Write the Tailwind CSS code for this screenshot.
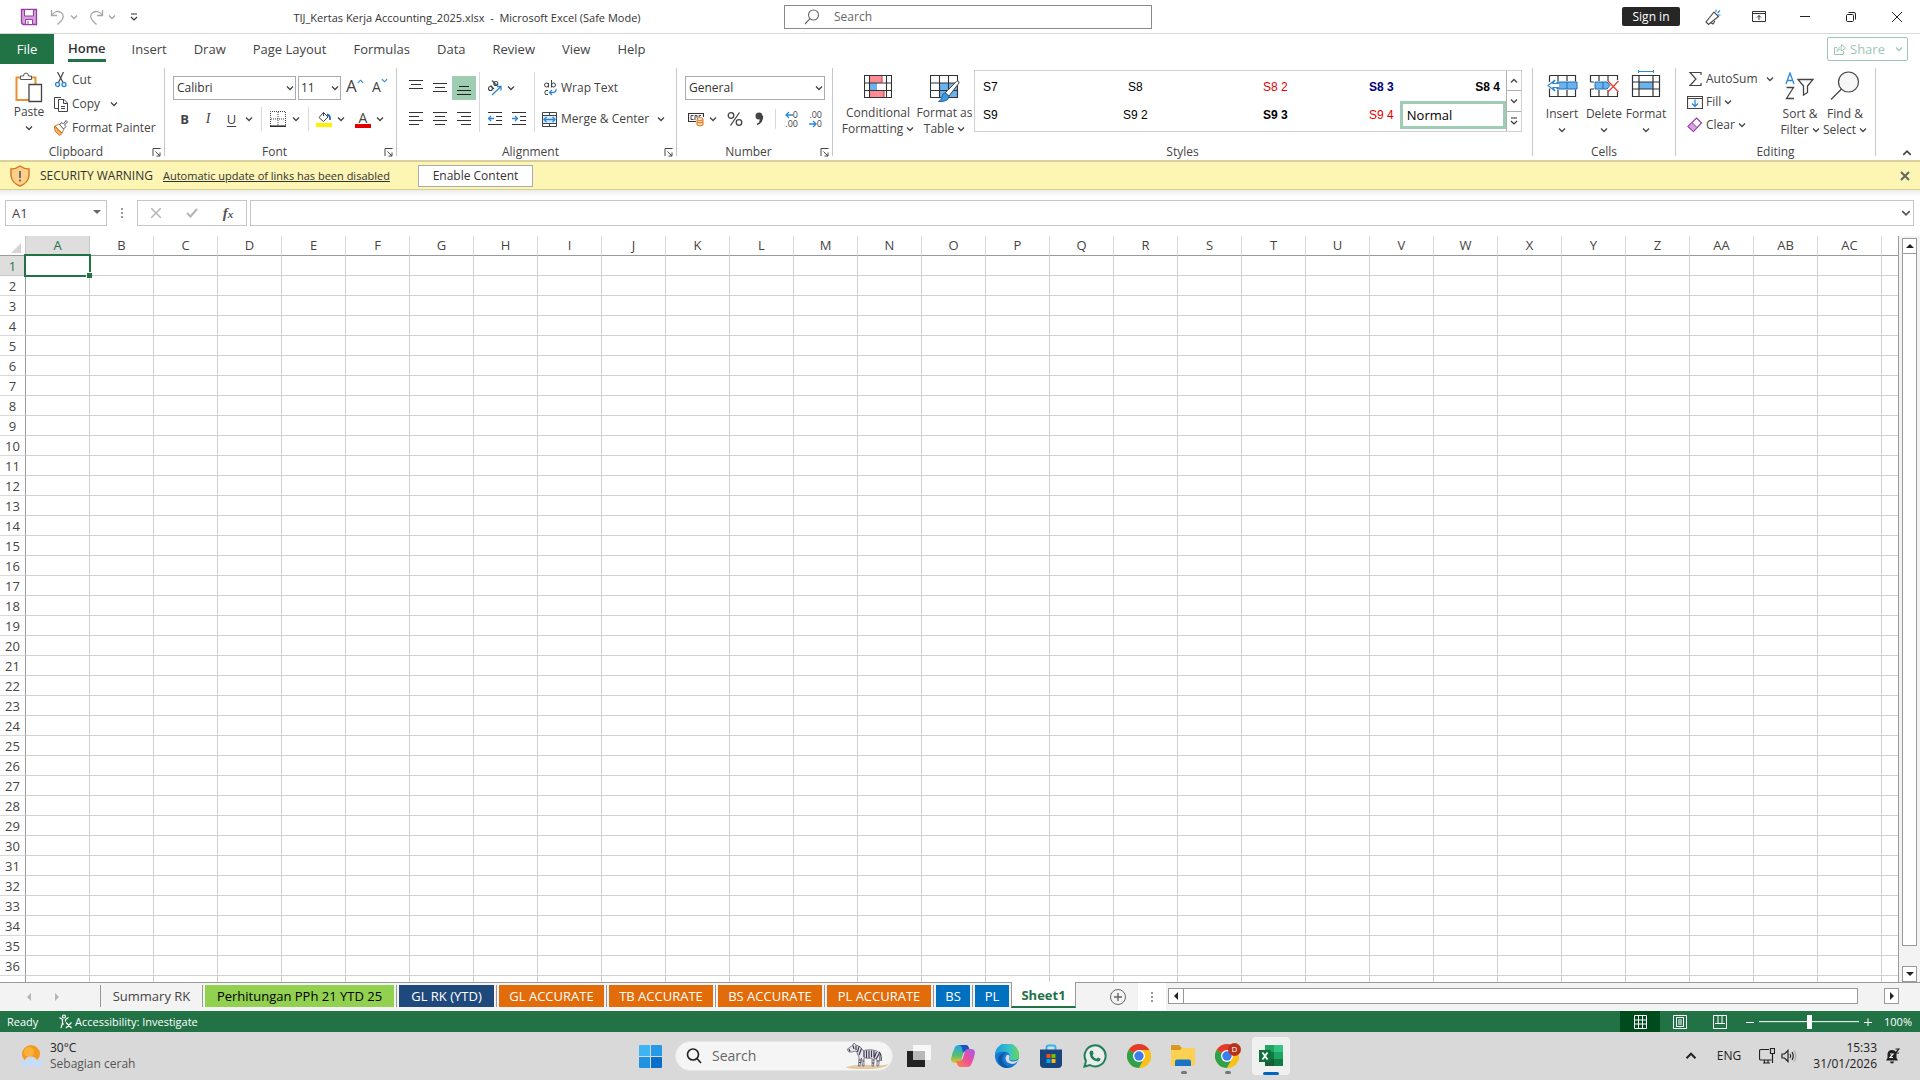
<!DOCTYPE html>
<html lang="en">
<head>
    <meta charset="UTF-8">
    <meta name="viewport" content="width=device-width, initial-scale=1.0">
    <title>TIJ_Kertas Kerja Accounting_2025.xlsx - Microsoft Excel</title>
    <script src="https://cdn.jsdelivr.net/npm/@tailwindcss/browser@4"></script>
</head>
<body class="h-screen flex flex-col overflow-hidden bg-white text-[#333] text-[12px] leading-4 font-['Open_Sans',sans-serif] whitespace-nowrap">

    <!-- Shared icons -->
    <svg class="hidden">
        <symbol id="chev" viewBox="0 0 8 8"><path d="M1 2.5 4 5.5 7 2.5" fill="none" stroke="currentColor" stroke-width="1.3"/></symbol>
        <symbol id="launcher" viewBox="0 0 9 9"><path d="M1 8V.5H8.5M3.500 3.500 8 8M8 4.500V8H4.500" fill="none" stroke="currentColor"/></symbol>
        <symbol id="chrome" viewBox="0 0 24 24">
            <circle cx="12" cy="12" r="12" fill="#fbc116"/>
            <path d="M12 12 1.600 6A12 12 0 0 1 22.400 6Z" fill="#e33b2e"/>
            <path d="M12 12 1.600 6A12 12 0 0 0 12 24L17 15Z" fill="#2da14c"/>
            <path d="M12 6H22.400A12 12 0 0 1 12 24L17.200 15Z" fill="#fbc116"/>
            <circle cx="12" cy="12" r="6" fill="#fff"/><circle cx="12" cy="12" r="4.700" fill="#3b7ded"/>
        </symbol>
    </svg>

    <!-- Title bar -->
    <header class="flex h-[34px] shrink-0 items-center border-b border-[#d8d8d8]">
        <div class="flex w-[784px] items-center">
            <button class="ml-5 w-[18px]" aria-label="Save"><svg class="size-[18px]" viewBox="0 0 18 18"><path d="M1.500 1.500H16.500V16.500H3L1.500 15Z" fill="#d6a2dc" stroke="#973aa5" stroke-width="1.300"/><path d="M4.500 1.500H13.500V8H4.500Z" fill="#fff" stroke="#973aa5"/><path d="M5.500 16.500V11.500H12.500V16.500Z" fill="#fff" stroke="#973aa5"/><path d="M8 13V16" stroke="#973aa5"/></svg></button>
            <button class="ml-3 w-4" aria-label="Undo"><svg class="size-4" viewBox="0 0 16 16" fill="none" stroke="#a6a6a6" stroke-width="1.300"><path d="M1.500 1V6.500H7"/><path d="M1.500 6.500C4 2.500 8 1.500 11 3.500C14 5.500 14 9 11 12L7.500 15.500"/></svg></button>
            <svg class="ml-1 size-2 text-[#a6a6a6]"><use href="#chev"/></svg>
            <button class="ml-2.5 w-4" aria-label="Redo"><svg class="size-4" viewBox="0 0 16 16" fill="none" stroke="#a6a6a6" stroke-width="1.300"><path d="M14.500 1V6.500H9"/><path d="M14.500 6.500C12 2.500 8 1.500 5 3.500C2 5.500 2 9 5 12L8.500 15.500"/></svg></button>
            <svg class="ml-1 size-2 text-[#a6a6a6]"><use href="#chev"/></svg>
            <button class="ml-3.5 w-2" aria-label="Customize toolbar"><svg class="size-2" viewBox="0 0 8 8" fill="none" stroke="#333" stroke-width="1.200"><path d="M1 1H7M1 4 4 7 7 4"/></svg></button>
            <h1 class="flex-1 pt-0.5 pl-3 text-center text-[11px] whitespace-pre">TIJ_Kertas Kerja Accounting_2025.xlsx  -  Microsoft Excel (Safe Mode)</h1>
        </div>
        <label class="flex h-6 w-[368px] items-center border border-[#8a8a8a] pl-[19px]">
            <svg class="size-4" viewBox="0 0 16 16" fill="none" stroke="#666" stroke-width="1.100"><circle cx="9.500" cy="6" r="5"/><path d="M6 9.700 1 15"/></svg>
            <input type="text" placeholder="Search" class="ml-3.5 w-40 outline-none placeholder:text-[#666]">
        </label>
        <div class="flex flex-1 items-center justify-end">
            <button class="mr-2.5 h-[19px] w-[58px] rounded-xs bg-[#262626] text-white">Sign in</button>
            <button class="flex w-[46px] justify-center" aria-label="Coming soon"><svg class="size-4" viewBox="0 0 16 16" fill="none" stroke="#444" stroke-width="1.100"><path d="M9 3 1 13 3.500 15.500 13.500 7.500ZM5.500 13.500 8 15 10 12"/><path d="M11 3V.5M12.500 4 15 1.500M13 6H15.500" stroke="#2b88d8"/></svg></button>
            <button class="flex w-[46px] justify-center" aria-label="Ribbon display options"><svg class="h-3 w-3.5" viewBox="0 0 14 12" fill="none" stroke="#333"><path d="M.5.5H13.500V10.500H.5ZM.5 2.500H13.500M7 9V4.500M5 6.500 7 4.500 9 6.500"/></svg></button>
            <button class="flex w-[46px] justify-center" aria-label="Minimize"><svg class="size-2.5" viewBox="0 0 10 10" stroke="#222"><path d="M0 4.500H10"/></svg></button>
            <button class="flex w-[46px] justify-center" aria-label="Restore"><svg class="size-2.5" viewBox="0 0 10 10" fill="none" stroke="#222"><rect x=".5" y="2.500" width="7" height="7" rx="1"/><path d="M2.500.5H8Q9.500.5 9.500 2V7.500"/></svg></button>
            <button class="flex w-[46px] justify-center" aria-label="Close"><svg class="size-2.5" viewBox="0 0 10 10" stroke="#222"><path d="M0 0 10 10M10 0 0 10"/></svg></button>
        </div>
    </header>

    <!-- Ribbon tabs -->
    <nav class="flex h-[30px] shrink-0 items-stretch text-[13px] text-[#444]">
        <button class="w-[54px] bg-[#217346] text-white">File</button>
        <button class="ml-3.5 mr-3 flex flex-col items-stretch pt-1.5 font-semibold text-[#333]">Home<span class="mt-[3px] h-[3px] bg-[#217346]"></span></button>
        <button class="pl-3.5 pr-[13px]">Insert</button>
        <button class="pl-3.5 pr-[13px]">Draw</button>
        <button class="pl-3.5 pr-[13px]">Page Layout</button>
        <button class="pl-3.5 pr-[13px]">Formulas</button>
        <button class="pl-3.5 pr-[13px]">Data</button>
        <button class="pl-3.5 pr-[13px]">Review</button>
        <button class="pl-3.5 pr-[13px]">View</button>
        <button class="pl-3.5 pr-[13px]">Help</button>
        <button class="mr-3 ml-auto mt-[3px] flex h-6 w-[81px] items-center rounded-xs border border-[#9cc7b5] pl-1.5 text-[#9cc7b5]">
            <svg class="mr-1 size-3" viewBox="0 0 12 12" fill="none" stroke="currentColor"><path d="M3 4.500H.5V11.500H9.500V8M3 8.500C3.500 5 5 4 7.500 4V1.500L11.500 5 7.500 8V6C5.500 6 4 6.500 3 8.500Z"/></svg>
            Share
            <svg class="ml-auto mr-1 size-2"><use href="#chev"/></svg>
        </button>
    </nav>

    <!-- Ribbon -->
    <div class="flex h-24 shrink-0 text-[#444]">
        <!-- Clipboard -->
        <section class="flex w-[164px] flex-col">
            <div class="flex flex-1">
                <button class="ml-2 flex w-[42px] flex-col items-center pt-2">
                    <svg class="h-8 w-7" viewBox="0 0 28 32" fill="none"><path d="M6 5.500H1.500V28H14" stroke="#e8912d" stroke-width="2"/><path d="M15 5.500H20.500V12" stroke="#e8912d" stroke-width="2"/><path d="M5.500 7.500V4H8.500Q8.500 1 11 1T13.500 4H16.500V7.500Z" fill="#fff" stroke="#555"/><path d="M14 12.500H26.500V29.500H14Z" fill="#fff" stroke="#444" stroke-width="1.300"/></svg>
                    <span>Paste</span>
                    <svg class="mt-1 size-2"><use href="#chev"/></svg>
                </button>
                <div class="flex flex-col pl-1 pt-1">
                    <button class="flex h-6 items-center gap-1"><svg class="h-4 w-3.5" viewBox="0 0 14 16" fill="none"><path d="M3.500 0 9 10.500M9.500 0 4.500 10.500" stroke="#444" stroke-width="1.200"/><circle cx="3.500" cy="12.500" r="2" stroke="#2b88d8" stroke-width="1.300"/><circle cx="10" cy="12.500" r="2" stroke="#2b88d8" stroke-width="1.300"/></svg>Cut</button>
                    <button class="flex h-6 items-center gap-1"><svg class="h-4 w-3.5" viewBox="0 0 14 16" fill="none" stroke="#444"><path d="M4 12.500H.5V1.500H7"/><path d="M4.500 3.500H10L13.500 7V15.500H4.500ZM9.500 3.500V7.500H13.500M7 10.500H11M7 12.500H11"/></svg>Copy<svg class="ml-1.5 size-2"><use href="#chev"/></svg></button>
                    <button class="flex h-6 items-center gap-1"><svg class="h-4 w-3.5" viewBox="0 0 14 16"><path d="M.5 6 8 13.500 5.500 15.500 1 11Z" fill="#f6b26b" stroke="#d9731a"/><path d="M1 6 5 4 10 9 8 13Z" fill="#fff" stroke="#d9731a"/><path d="M5.500 4.500 8 2.500 9.500 4 12 .5 13.500 2 10.500 5 12 6.500 9.500 9Z" fill="#fff" stroke="#555"/></svg>Format Painter</button>
                </div>
            </div>
            <div class="grid h-4 grid-cols-[1fr_9px] items-center pr-[3px] text-center">Clipboard<svg class="size-[9px]"><use href="#launcher"/></svg></div>
        </section>
        <div class="my-1 w-px bg-[#c8c8c8]"></div>

        <!-- Font -->
        <section class="flex w-[231px] flex-col">
            <div class="flex-1 pl-2 pt-3">
                <div class="flex h-6 items-center">
                    <div class="relative"><select aria-label="Font" class="h-6 w-[123px] appearance-none border border-[#ababab] pl-[3px] text-[#333]"><option>Calibri</option></select><svg class="absolute right-0.5 top-2 size-2"><use href="#chev"/></svg></div>
                    <div class="relative ml-0.5"><select aria-label="Font size" class="h-6 w-[43px] appearance-none border border-[#ababab] pl-0.5 text-[#333]"><option>11</option></select><svg class="absolute right-0.5 top-2 size-2"><use href="#chev"/></svg></div>
                    <button class="relative ml-[5px] w-4 pb-1 text-left text-[17px]">A<svg class="absolute -right-0.5 top-0 size-[7px] rotate-180 text-[#2b88d8]"><use href="#chev"/></svg></button>
                    <button class="relative ml-2.5 w-3.5 pb-0.5 text-left text-[14px]">A<svg class="absolute -right-0.5 -top-0.5 size-[7px] text-[#2b88d8]"><use href="#chev"/></svg></button>
                </div>
                <div class="mt-[7px] flex h-6 items-center">
                    <button class="w-[23px] text-[13px] font-bold">B</button>
                    <button class="w-6 text-[14px] italic font-['Liberation_Serif',serif]">I</button>
                    <button class="w-[23px] text-[13px] underline underline-offset-2">U</button>
                    <svg class="ml-0.5 size-2"><use href="#chev"/></svg>
                    <div class="ml-2 h-6 w-px bg-[#d8d8d8]"></div>
                    <button class="ml-2 w-4" aria-label="Borders"><svg class="size-4" viewBox="0 0 16 16" fill="none" stroke="#444"><path d="M.5 15V.5H15.500V15M8 1V15M1 8H15" stroke-dasharray="1 1"/><path d="M0 15.200H16" stroke="#222" stroke-width="1.500"/></svg></button>
                    <svg class="ml-1.5 size-2"><use href="#chev"/></svg>
                    <div class="ml-2 h-6 w-px bg-[#d8d8d8]"></div>
                    <button class="ml-[7px] w-4" aria-label="Fill color"><svg class="size-4" viewBox="0 0 16 16" fill="none"><path d="M7.500 1.500 12 6 7.500 10.500 3 6.500ZM7.500 1.500V5" stroke="#444"/><path d="M11 3.500Q14.500 4 14 9" stroke="#1f6fb8" stroke-width="1.800"/><path d="M0 12H16V16H0Z" fill="#fff200"/></svg></button>
                    <svg class="ml-[5px] size-2"><use href="#chev"/></svg>
                    <button class="ml-2.5 w-4 border-b-4 border-[#e00000] text-[14px] leading-[13px]">A</button>
                    <svg class="ml-[5px] size-2"><use href="#chev"/></svg>
                </div>
            </div>
            <div class="grid h-4 grid-cols-[1fr_9px] items-center pr-[3px] text-center">Font<svg class="size-[9px]"><use href="#launcher"/></svg></div>
        </section>
        <div class="my-1 w-px bg-[#c8c8c8]"></div>

        <!-- Alignment -->
        <section class="flex w-[279px] flex-col">
            <div class="flex flex-1 pl-[7px]">
                <div class="grid grid-cols-[24px_24px_24px] content-start gap-y-[7px] pt-3">
                    <button class="grid h-6 place-items-center" aria-label="Top align"><svg class="h-4 w-3.5" viewBox="0 0 14 16" stroke="#333"><path d="M0 .5H14M2 4.500H12M0 8.500H14"/></svg></button>
                    <button class="grid h-6 place-items-center" aria-label="Middle align"><svg class="h-4 w-3.5" viewBox="0 0 14 16" stroke="#333"><path d="M0 3.500H14M2 7.500H12M0 11.500H14"/></svg></button>
                    <button class="grid h-6 place-items-center bg-[#9fcdb3]" aria-label="Bottom align"><svg class="h-4 w-3.5" viewBox="0 0 14 16" stroke="#222"><path d="M2 6.500H12M0 10.500H14M0 14.500H14"/></svg></button>
                    <button class="grid h-6 place-items-center" aria-label="Align left"><svg class="h-4 w-3.5" viewBox="0 0 14 16" stroke="#333"><path d="M0 1.500H14M0 5.500H10M0 9.500H14M0 13.500H10"/></svg></button>
                    <button class="grid h-6 place-items-center" aria-label="Center"><svg class="h-4 w-3.5" viewBox="0 0 14 16" stroke="#333"><path d="M0 1.500H14M2 5.500H12M0 9.500H14M2 13.500H12"/></svg></button>
                    <button class="grid h-6 place-items-center" aria-label="Align right"><svg class="h-4 w-3.5" viewBox="0 0 14 16" stroke="#333"><path d="M0 1.500H14M4 5.500H14M0 9.500H14M4 13.500H14"/></svg></button>
                </div>
                <div class="ml-[3px] mt-2 h-[60px] w-px bg-[#d8d8d8]"></div>
                <div class="w-[54px] pl-[3px] pt-3">
                    <button class="ml-1 flex h-6 items-center gap-1" aria-label="Orientation"><svg class="size-4" viewBox="0 0 16 16" fill="none"><g stroke="#444" stroke-width="1.100"><circle cx="3.500" cy="8.500" r="2"/><path d="M3.500 5.500 7 9"/><path d="M5 .5 10 5.500"/><circle cx="8.800" cy="3.500" r="2"/></g><path d="M5 15 14 6.500M10 6.500H14V10.500" stroke="#2b88d8" stroke-width="1.300"/></svg><svg class="size-2"><use href="#chev"/></svg></button>
                    <div class="mt-[7px] flex">
                        <button class="grid h-6 w-6 place-items-center" aria-label="Decrease indent"><svg class="h-4 w-3.5" viewBox="0 0 14 16" fill="none" stroke="#333"><path d="M0 1.500H14M8 5.500H14M8 9.500H14M0 13.500H14"/><path d="M6 7.500H.5M3 5 .5 7.500 3 10" stroke="#2b88d8" stroke-width="1.300"/></svg></button>
                        <button class="grid h-6 w-6 place-items-center" aria-label="Increase indent"><svg class="h-4 w-3.5" viewBox="0 0 14 16" fill="none" stroke="#333"><path d="M0 1.500H14M8 5.500H14M8 9.500H14M0 13.500H14"/><path d="M0 7.500H5.500M3 5 5.500 7.500 3 10" stroke="#2b88d8" stroke-width="1.300"/></svg></button>
                    </div>
                </div>
                <div class="mt-2 h-[60px] w-px bg-[#d8d8d8]"></div>
                <div class="pl-[7px] pt-3">
                    <button class="flex h-6 items-center gap-[3px]"><svg class="size-4" viewBox="0 0 16 16" fill="none"><g stroke="#444"><circle cx="4.500" cy="5" r="2"/><path d="M6.500 3V7.500"/><path d="M9.500 0V7.500"/><circle cx="11.500" cy="5" r="2"/><path d="M6 10.500Q3 9.500 2.800 12.500T6 14.500"/></g><path d="M14 9Q15 13 8 12.500M10 10 7.500 12.500 10 15" stroke="#2b88d8" stroke-width="1.300"/></svg>Wrap Text</button>
                    <button class="mt-[7px] flex h-6 items-center gap-1"><svg class="size-[15px]" viewBox="0 0 15 15" fill="none"><path d="M.5 3.500H14.500V11.500H.5Z" fill="#d7eaf9"/><path d="M.5.5H14.500V14.500H.5ZM.5 3.500H14.500M.5 11.500H14.500M7.500.5V3.500M7.500 11.500V14.500" stroke="#444"/><path d="M2 7.500H13M4.500 5 2 7.500 4.500 10M10.500 5 13 7.500 10.500 10" stroke="#2b88d8" stroke-width="1.300"/></svg>Merge &amp; Center<svg class="ml-1 size-2"><use href="#chev"/></svg></button>
                </div>
            </div>
            <div class="grid h-4 grid-cols-[1fr_9px] items-center pr-[3px] text-center">Alignment<svg class="size-[9px]"><use href="#launcher"/></svg></div>
        </section>
        <div class="my-1 w-px bg-[#c8c8c8]"></div>

        <!-- Number -->
        <section class="flex w-[155px] flex-col">
            <div class="flex-1 pl-2 pt-3">
                <div class="relative w-[140px]"><select aria-label="Number format" class="h-6 w-full appearance-none border border-[#ababab] pl-[3px] text-[#333]"><option>General</option></select><svg class="absolute right-0.5 top-2 size-2"><use href="#chev"/></svg></div>
                <div class="mt-[7px] flex h-6 items-center">
                    <button class="ml-[3px] w-4" aria-label="Accounting format"><svg class="size-4" viewBox="0 0 16 16" fill="none"><path d="M8 10.500H.5V2.500H15.500V6" stroke="#333" stroke-width="1.200"/><path d="M5.500 4.500H3V8.500H5.500M7 9V4.500H9V7M11 6V4.500H13" stroke="#444"/><path d="M9 8.500V14Q12 16 15 14V8.500" fill="#fbd9b5" stroke="#d9731a"/><ellipse cx="12" cy="8" rx="3" ry="1.400" fill="#fff" stroke="#d9731a"/><path d="M9 11Q12 13 15 11" stroke="#d9731a"/></svg></button>
                    <svg class="ml-[5px] size-2"><use href="#chev"/></svg>
                    <button class="ml-1.5 w-6" aria-label="Percent"><svg class="m-auto size-4" viewBox="0 0 16 16" fill="none" stroke="#444" stroke-width="1.300"><circle cx="4" cy="4.500" r="2.800"/><circle cx="12" cy="11.500" r="2.800"/><path d="M12.500 1.500 3.500 14.500"/></svg></button>
                    <button class="w-6" aria-label="Comma style"><svg class="m-auto size-4" viewBox="0 0 16 16"><circle cx="8" cy="5" r="3.500" fill="#444"/><path d="M11.500 5Q11.500 11.500 6 13.500" fill="none" stroke="#444" stroke-width="1.500"/><path d="M11.500 5Q11.500 10 8 12L9 7Z" fill="#444"/></svg></button>
                    <div class="ml-1 h-5 w-px bg-[#d8d8d8]"></div>
                    <button class="ml-1.5 flex w-4 flex-col items-end text-[9px] leading-[9px]" aria-label="Increase decimal"><span class="flex items-center"><svg class="size-2" viewBox="0 0 8 8" fill="none" stroke="#2b88d8" stroke-width="1.300"><path d="M8 4H1M4 1 1 4 4 7"/></svg>0</span><span>.00</span></button>
                    <button class="ml-2 flex w-4 flex-col items-end text-[9px] leading-[9px]" aria-label="Decrease decimal"><span>.00</span><span class="flex items-center"><svg class="size-2" viewBox="0 0 8 8" fill="none" stroke="#2b88d8" stroke-width="1.300"><path d="M0 4H7M4 1 7 4 4 7"/></svg>0</span></button>
                </div>
            </div>
            <div class="grid h-4 grid-cols-[1fr_9px] items-center pr-[3px] text-center">Number<svg class="size-[9px]"><use href="#launcher"/></svg></div>
        </section>
        <div class="my-1 w-px bg-[#c8c8c8]"></div>

        <!-- Styles -->
        <section class="flex min-w-0 flex-1 flex-col">
            <div class="flex flex-1">
                <button class="ml-2 flex w-[74px] flex-col items-center pt-[11px]">
                    <svg class="mb-1.5 h-6 w-7" viewBox="0 0 28 24" fill="none"><path d="M5.500 1H18V8H5.500ZM5.500 16H20V22.500H5.500Z" fill="#ff8c94"/><path d="M5.500 8H13V16H5.500Z" fill="#6cb2ee"/><path d="M.5.500H27.500V22.500H.5ZM.5 8H27.500M.5 15.500H27.500M5.500.5V22.500M22.500.5V22.500" stroke="#333" stroke-width="1.100"/><path d="M18 1V8M20 16V22" stroke="#c33"/></svg>
                    <span>Conditional</span>
                    <span class="flex items-center gap-[3px]">Formatting<svg class="size-2"><use href="#chev"/></svg></span>
                </button>
                <button class="flex w-[59px] flex-col items-center pt-[11px]">
                    <svg class="mb-0.5 h-7 w-[30px]" viewBox="0 0 30 28" fill="none"><path d="M9.500 8H27.500V22.500H9.500Z" fill="#6cb2ee"/><path d="M.5.500H27.500V22.500H.5ZM.5 8H27.500M.5 15.500H27.500M9.500.5V22.500M18.500.5V22.500" stroke="#333" stroke-width="1.100"/><path d="M15 18 26.500 6.500Q29 5 29 8L19 21Z" fill="#fff" stroke="#444"/><path d="M15 18 19 21Q19 27 8.500 26.500Q11.500 25 12 21.500T15 18Z" fill="#3f97e0" stroke="#2468a8"/></svg>
                    <span>Format as</span>
                    <span class="flex items-center gap-[3px]">Table<svg class="size-2"><use href="#chev"/></svg></span>
                </button>
                <div class="mt-1.5 mr-2.5 flex h-[62px] flex-1 border border-[#d0d0d0] text-black font-['Liberation_Sans',sans-serif]">
                    <div class="grid flex-1 grid-cols-5 grid-rows-[28px_28px] content-start pt-0.5 [&>button]:h-7 [&>button]:pr-1.5 [&>button]:pl-2">
                        <button class="text-left">S7</button>
                        <button>S8</button>
                        <button class="text-right text-[#e00000]">S8 2</button>
                        <button class="text-right font-bold text-[#000080]">S8 3</button>
                        <button class="text-right font-bold">S8 4</button>
                        <button class="text-left">S9</button>
                        <button>S9 2</button>
                        <button class="text-right font-bold">S9 3</button>
                        <button class="text-right text-[#e00000]">S9 4</button>
                        <button class="border-3 border-[#9fcdb3] text-left text-[13px] font-['Open_Sans',sans-serif]"><span class="-ml-1">Normal</span></button>
                    </div>
                    <div class="flex w-[15px] flex-col divide-y divide-[#b0b0b0] border-l border-[#b0b0b0] text-[#444]">
                        <button class="grid flex-1 place-items-center" aria-label="Scroll up"><svg class="size-2 rotate-180"><use href="#chev"/></svg></button>
                        <button class="grid flex-1 place-items-center" aria-label="Scroll down"><svg class="size-2"><use href="#chev"/></svg></button>
                        <button class="grid flex-1 place-items-center" aria-label="More styles"><svg class="size-2" viewBox="0 0 8 8" fill="none" stroke="#333" stroke-width="1.200"><path d="M1 1H7M1 4 4 7 7 4"/></svg></button>
                    </div>
                </div>
            </div>
            <div class="h-4 text-center">Styles</div>
        </section>
        <div class="my-1 w-px bg-[#c8c8c8]"></div>

        <!-- Cells -->
        <section class="flex w-[142px] flex-col">
            <div class="flex flex-1 pl-2">
                <button class="flex w-[42px] flex-col items-center pt-1.5">
                    <svg class="mb-1.5 h-[30px] w-8" viewBox="0 0 32 30" fill="none"><path d="M3.500 5.500H29.500V11.500M3.500 5.500V12M12 5.500V11M21 5.500V11M3.500 18.500V26.500H29.500V19.500M12 20V26M21 20V26" stroke="#333" stroke-width="1.200"/><path d="M11 12H31V19H11Z" fill="#6cb2ee" stroke="#1f6fb8"/><path d="M21 12V19" stroke="#1f6fb8"/><path d="M13 13.500H7L9 10 2 15.500 9 21 7 17.500H13" fill="#fff" stroke="#2b88d8" stroke-width="1.200"/></svg>
                    <span>Insert</span><svg class="mt-1 size-2"><use href="#chev"/></svg>
                </button>
                <button class="flex w-[42px] flex-col items-center pt-1.5">
                    <svg class="mb-1.5 h-[30px] w-8" viewBox="0 0 32 30" fill="none"><path d="M2.500 12V5.500H29.500V10M11 5.500V11M20 5.500V11M2.500 19V26.500H29.500V22M11 20V26M20 20V26M2.500 12H6M2.500 19H6" stroke="#333" stroke-width="1.200"/><path d="M7 12H19L22 15.500 19 19H7Z" fill="#6cb2ee" stroke="#1f6fb8"/><path d="M15 12V19" stroke="#1f6fb8"/><path d="M20 11 30.500 22M30.500 11 20 22" stroke="#e8443a" stroke-width="1.400"/></svg>
                    <span>Delete</span><svg class="mt-1 size-2"><use href="#chev"/></svg>
                </button>
                <button class="flex w-[42px] flex-col items-center pt-1.5">
                    <svg class="mb-1.5 h-[30px] w-8" viewBox="0 0 32 30" fill="none"><path d="M9 12H23V19H9Z" fill="#6cb2ee"/><path d="M2.500 5.500H29.500V26.500H2.500ZM2.500 12H29.500M2.500 19H29.500M9 5.500V26.500M23 5.500V26.500" stroke="#333" stroke-width="1.200"/><path d="M8.500 0V3M23.500 0V3M8.500 1.500H23.500" stroke="#2b88d8"/></svg>
                    <span>Format</span><svg class="mt-1 size-2"><use href="#chev"/></svg>
                </button>
            </div>
            <div class="h-4 text-center">Cells</div>
        </section>
        <div class="my-1 w-px bg-[#c8c8c8]"></div>

        <!-- Editing -->
        <section class="flex w-[199px] flex-col">
            <div class="flex flex-1 pl-[11px]">
                <div class="w-[90px] pt-[3px]">
                    <button class="flex h-[23px] items-center gap-[3px]"><svg class="size-4" viewBox="0 0 16 16" fill="none" stroke="#444" stroke-width="1.200"><path d="M14 4V1.500H3L9 8 3 14.500H14V12"/></svg>AutoSum<svg class="ml-[5px] size-2"><use href="#chev"/></svg></button>
                    <button class="flex h-[23px] items-center gap-[3px]"><svg class="size-4" viewBox="0 0 16 16" fill="none"><path d="M.5 2.500H15.500V14.500H.5ZM.5 4.500H15.500" stroke="#444" stroke-width="1.200"/><path d="M8 5.500V12.500M5 9.500 8 12.500 11 9.500" stroke="#2b88d8" stroke-width="1.300"/></svg>Fill<svg class="size-2"><use href="#chev"/></svg></button>
                    <button class="flex h-[23px] items-center gap-[3px]"><svg class="size-4" viewBox="0 0 16 16"><path d="M9.500 1 14.500 6 6.500 14.500 1 9.500Z" fill="#fff" stroke="#973aa5" stroke-width="1.200"/><path d="M5 5.500 10 10.500 6.500 14.500 1 9.500Z" fill="#d6a2dc" stroke="#973aa5"/></svg>Clear<svg class="size-2"><use href="#chev"/></svg></button>
                </div>
                <button class="flex w-[46px] flex-col items-center pt-2">
                    <svg class="mb-1.5 h-7 w-[30px]" viewBox="0 0 30 28" fill="none" stroke-width="1.300"><path d="M1 12 5 1 9 12M2.500 8.500H7.500" stroke="#2b88d8"/><path d="M1.500 15.500H8.500L1.500 26.500H9" stroke="#444"/><path d="M13 7.500H28L22.500 14V20.500L18.500 23V14Z" stroke="#444"/></svg>
                    <span>Sort &amp;</span>
                    <span class="flex items-center gap-[3px]">Filter<svg class="size-2"><use href="#chev"/></svg></span>
                </button>
                <button class="flex w-[44px] flex-col items-center pt-1.5">
                    <svg class="mb-1.5 h-[30px] w-[30px]" viewBox="0 0 30 30" fill="none" stroke="#444" stroke-width="1.200"><circle cx="18.500" cy="12" r="10" fill="#f7f7f7"/><path d="M11.500 19 1 29.500"/></svg>
                    <span>Find &amp;</span>
                    <span class="flex items-center gap-[3px]">Select<svg class="size-2"><use href="#chev"/></svg></span>
                </button>
            </div>
            <div class="h-4 text-center">Editing</div>
        </section>
        <div class="my-1 w-px bg-[#c8c8c8]"></div>
        <div class="flex w-11 items-end justify-end pb-0.5 pr-2"><button aria-label="Collapse ribbon"><svg class="size-2.5 rotate-180"><use href="#chev"/></svg></button></div>
    </div>

    <!-- Security warning -->
    <div class="flex h-[30px] shrink-0 items-center border-t-2 border-b border-t-[#d8cf9c] border-b-[#d9d08a] bg-[#fcf5b4] text-[#333]">
        <svg class="ml-2.5 h-[22px] w-5" viewBox="0 0 20 22"><path d="M10 1Q14 4 19 4V11Q18 18 10 21Q2 18 1 11V4Q6 4 10 1Z" fill="#fbd08a" stroke="#d9731a" stroke-width="1.400"/><path d="M10 6V13M10 14.500V16.500" stroke="#555" stroke-width="1.600"/></svg>
        <span class="ml-2.5 w-[113px]">SECURITY WARNING</span>
        <a href="#" class="ml-2.5 w-[235px] text-[11px] underline">Automatic update of links has been disabled</a>
        <button class="ml-5 h-[22px] w-[115px] border border-[#ababab] bg-white">Enable Content</button>
        <button class="mr-2.5 ml-auto" aria-label="Dismiss"><svg class="size-2.5" viewBox="0 0 10 10" stroke="#666" stroke-width="2"><path d="M1 1 9 9M9 1 1 9"/></svg></button>
    </div>

    <!-- Formula bar -->
    <div class="flex h-[46px] shrink-0 items-start bg-linear-to-b from-[#ececec] to-white to-15% pt-2.5 pr-1.5 pl-[5px]">
        <div class="relative"><input aria-label="Name box" value="A1" class="h-[26px] w-[102px] border border-[#c6c6c6] bg-white pl-1.5 text-[13px] text-[#444]"><svg class="absolute right-1.5 top-2.5 h-1 w-2" viewBox="0 0 8 4"><path d="M0 0H8L4 4Z" fill="#666"/></svg></div>
        <svg class="mx-3.5 h-[26px] w-0.5" viewBox="0 0 2 26" fill="#999"><path d="M0 8H2V10H0ZM0 12H2V14H0ZM0 16H2V18H0Z"/></svg>
        <div class="flex h-[26px] w-[110px] items-center border border-[#c6c6c6]">
            <button class="flex w-9 justify-center" aria-label="Cancel"><svg class="size-2.5" viewBox="0 0 10 10" stroke="#b5b5b5" stroke-width="1.500"><path d="M0 0 10 10M10 0 0 10"/></svg></button>
            <button class="flex w-9 justify-center" aria-label="Enter"><svg class="h-2.5 w-3" viewBox="0 0 12 10" fill="none" stroke="#b5b5b5" stroke-width="2"><path d="M1 5 4.500 8.500 11 1"/></svg></button>
            <button class="w-9 text-[15px] font-bold italic text-[#555] font-['Liberation_Serif',serif]">f<span class="text-[11px]">x</span></button>
        </div>
        <div class="relative ml-[3px] flex-1"><input aria-label="Formula" class="h-[26px] w-full border border-[#c6c6c6] bg-white pl-1"><svg class="absolute right-[3px] top-2 size-2.5 text-[#555]"><use href="#chev"/></svg></div>
    </div>

    <!-- Sheet -->
    <main class="flex min-h-0 flex-1 border-b border-[#9a9a9a]">
        <div class="relative min-w-0 flex-1 overflow-hidden border-r border-[#9a9a9a]">
            <table class="w-full table-fixed border-separate border-spacing-0 text-center text-[13px] leading-4 text-[#444]">
                <thead><tr id="letters" class="h-5"></tr></thead>
                <tbody id="rows"></tbody>
            </table>
            <!-- Active cell -->
            <div class="absolute left-[24px] top-[18px] h-[23px] w-[67px] border-2 border-[#217346]"><span class="absolute -bottom-[3px] -right-[3px] size-[6px] border-t border-l border-white bg-[#217346]"></span></div>
        </div>
        <div class="flex w-[21px] flex-col items-center bg-[#f3f3f3] pt-0.5">
            <button class="grid h-4 w-[15px] place-items-center border border-[#999] bg-white" aria-label="Scroll up"><svg class="h-1 w-2" viewBox="0 0 8 4"><path d="M0 4H8L4 0Z" fill="#222"/></svg></button>
            <div class="w-[15px] flex-1 border border-t-0 border-[#999] bg-white"></div>
            <button class="mt-5 grid h-4 w-[15px] place-items-center border border-[#999] bg-white" aria-label="Scroll down"><svg class="h-1 w-2" viewBox="0 0 8 4"><path d="M0 0H8L4 4Z" fill="#222"/></svg></button>
        </div>
    </main>

    <!-- Sheet tabs -->
    <div class="flex h-7 shrink-0 bg-[#f3f3f3] text-[13px]">
        <div class="flex w-[100px] items-center pl-[27px]">
            <button aria-label="Previous sheet"><svg class="h-2 w-1" viewBox="0 0 4 8"><path d="M4 0V8L0 4Z" fill="#b5b5b5"/></svg></button>
            <button class="ml-6" aria-label="Next sheet"><svg class="h-2 w-1" viewBox="0 0 4 8"><path d="M0 0V8L4 4Z" fill="#b5b5b5"/></svg></button>
        </div>
        <div class="flex items-start gap-0.5 pt-0.5 text-white [&>i]:h-[22px] [&>i]:w-px [&>i]:bg-[#999]">
            <i></i><button class="h-[22px] w-[97px] text-[#444]">Summary RK</button>
            <i></i><button class="h-[22px] w-[189px] bg-[#92d050] text-black">Perhitungan PPh 21 YTD 25</button>
            <i></i><button class="h-[22px] w-[95px] bg-[#1f497d]">GL RK (YTD)</button>
            <i></i><button class="h-[22px] w-[105px] bg-[#e26b0a]">GL ACCURATE</button>
            <i></i><button class="h-[22px] w-[104px] bg-[#e26b0a]">TB ACCURATE</button>
            <i></i><button class="h-[22px] w-[104px] bg-[#e26b0a]">BS ACCURATE</button>
            <i></i><button class="h-[22px] w-[104px] bg-[#e26b0a]">PL ACCURATE</button>
            <i></i><button class="h-[22px] w-[34px] bg-[#0070c0]">BS</button>
            <i></i><button class="h-[22px] w-[34px] bg-[#0070c0]">PL</button>
        </div>
        <button class="ml-0.5 -mt-px h-[26px] w-[65px] border-x border-b-2 border-x-[#999] border-b-[#217346] bg-white pt-0.5 font-bold text-[#217346]">Sheet1</button>
        <div class="flex w-[62px] items-center justify-end pr-3"><button aria-label="New sheet"><svg class="size-4" viewBox="0 0 16 16" fill="none" stroke="#666"><circle cx="8" cy="8" r="7.500"/><path d="M8 4V12M4 8H12" stroke-width="1.400"/></svg></button></div>
        <div class="flex w-7 items-center justify-center bg-white"><svg class="h-3 w-0.5" viewBox="0 0 2 12" fill="#999"><path d="M0 1H2V3H0ZM0 5H2V7H0ZM0 9H2V11H0Z"/></svg></div>
        <div class="flex flex-1 items-start pr-[21px] pl-0.5 pt-[5px]">
            <button class="grid h-4 w-4 place-items-center border border-[#999] bg-white" aria-label="Scroll left"><svg class="h-2 w-1" viewBox="0 0 4 8"><path d="M4 0V8L0 4Z" fill="#222"/></svg></button>
            <div class="mr-[26px] h-4 flex-1 border border-l-0 border-[#999] bg-white"></div>
            <button class="grid h-4 w-[15px] place-items-center border border-[#999] bg-white" aria-label="Scroll right"><svg class="h-2 w-1" viewBox="0 0 4 8"><path d="M0 0V8L4 4Z" fill="#222"/></svg></button>
        </div>
    </div>

    <!-- Status bar -->
    <footer class="flex h-[21px] shrink-0 items-center bg-[#217346] text-[11px] text-white">
        <span class="ml-[7px] w-[51px] font-medium">Ready</span>
        <svg class="mr-0.5 size-[15px]" viewBox="0 0 15 15" fill="none" stroke="#fff" stroke-width="1.200"><circle cx="6" cy="2.500" r="1.500"/><path d="M1.500 3.500 4.500 5.500V9L3 14M10.500 3.500 7.500 5.500V7.500M4.500 10H6M8 8.500 13.500 14M13.500 8.500 8 14"/></svg>
        <button class="font-medium">Accessibility: Investigate</button>
        <button class="ml-auto grid h-full w-10 place-items-center bg-[#004b1c]" aria-label="Normal view"><svg class="h-3.5 w-[13px]" viewBox="0 0 13 14" fill="none" stroke="#fff"><path d="M.5.500H12.500V13.500H.5ZM4.500.5V13.500M8.500.5V13.500M.5 5H12.500M.5 9H12.500"/></svg></button>
        <button class="grid h-full w-10 place-items-center" aria-label="Page layout view"><svg class="size-3.5" viewBox="0 0 14 14" fill="none" stroke="#fff"><path d="M.5.500H13.500V13.500H.5ZM3.500 2.500H10.500V11.500H3.500ZM5 5H9M5 7H9M5 9H9"/></svg></button>
        <button class="grid h-full w-10 place-items-center" aria-label="Page break view"><svg class="size-3.5" viewBox="0 0 14 14" fill="none" stroke="#fff"><path d="M.5.500H13.500V13.500H.5ZM5 .5V8.500M9 .5V8.500M2 8.500H12"/></svg></button>
        <button class="ml-1.5" aria-label="Zoom out"><svg class="size-2" viewBox="0 0 8 8" stroke="#fff"><path d="M0 4.500H8"/></svg></button>
        <input type="range" aria-label="Zoom" value="50" class="mx-[5px] h-3.5 w-[100px] appearance-none bg-linear-to-b from-transparent from-45% via-white via-45% to-transparent to-55% [&::-webkit-slider-thumb]:h-3.5 [&::-webkit-slider-thumb]:w-[5px] [&::-webkit-slider-thumb]:appearance-none [&::-webkit-slider-thumb]:bg-white">
        <button aria-label="Zoom in"><svg class="size-2" viewBox="0 0 8 8" stroke="#fff"><path d="M0 4.500H8M4 .5V8.500"/></svg></button>
        <span class="mr-2 ml-3">100%</span>
    </footer>

    <!-- Taskbar -->
    <div class="flex h-12 shrink-0 items-center bg-[#d9d9d9] text-[#222]">
        <div class="flex w-[628px] items-center pl-5">
            <svg class="size-6" viewBox="0 0 24 24"><circle cx="11" cy="10" r="9" fill="#f59a1d"/><circle cx="9" cy="8" r="5" fill="#fbb13c"/><path d="M5 23Q1 23 1 19.500T5 16Q6 12.500 11 12.500Q15 12.500 16.500 15.500Q23 15 23 19.500Q23 23 19 23Z" fill="#c9dcf7"/></svg>
            <div class="ml-1.5">30°C<br><span class="text-[#555]">Sebagian cerah</span></div>
        </div>
        <button class="grid w-11 place-items-center" aria-label="Start"><svg class="size-[23px]" viewBox="0 0 23 23" fill="#1583d8"><path d="M0 1Q0 0 1 0H11V11H0Z" fill="#3fb4f2"/><path d="M12 0H22Q23 0 23 1V11H12Z" fill="#259be6"/><path d="M0 12H11V23H1Q0 23 0 22Z" fill="#1f93e2"/><path d="M12 12H23V22Q23 23 22 23H12Z" fill="#0a6fcb"/></svg></button>
        <label class="ml-[3px] mr-1 flex h-[30px] w-[218px] items-center rounded-full border border-[#e6e6e6] bg-[#f5f5f5] pl-2.5">
            <svg class="size-4" viewBox="0 0 16 16" fill="none" stroke="#222" stroke-width="1.600"><circle cx="7" cy="6.500" r="5.500"/><path d="M11 10.500 15 15"/></svg>
            <input type="text" placeholder="Search" class="ml-2.5 w-[134px] text-[14px] outline-none placeholder:text-[#666]">
            <svg class="h-[26px] w-[42px]" viewBox="0 0 42 26" fill="none"><path d="M0 24Q10 21 24 22T42 21Q40 26 20 26T0 24Z" fill="#e2c9a0"/><path d="M3 9 1 6.500 7 2 8 0 10 2Q15 3 17 7.500Q25 5.500 31 8Q34 10 33.500 17L32.500 23H31L31 17 28.500 15 27.500 23H26L26 15Q21 16 18 14.500L18 23H16.500L15.500 15 14 23H12.500L13 14Q11 11 10.500 8L5 9Z" fill="#e9e6ec" stroke="#555268" stroke-width=".7"/><path d="M7 2.500 8 6M10 2.500V7M13 3.500 11.500 9M15.500 5.500 13 12M18 8V14M20.500 7.500V15M23 7.500V15M25.500 7.500V14M28 8V15M30.500 9 28.500 14M33 11 30 16M13 17H15M13 19.500H15M16.500 18H18M26.500 17H28M26 20H28M31 18H33M3 6 4 8.500" stroke="#3c3950" stroke-width="1.200"/><path d="M33 9Q36 12 35 18" stroke="#3c3950" stroke-width="1.200"/></svg>
        </label>
        <button class="grid w-11 place-items-center" aria-label="Task view"><svg class="size-6" viewBox="0 0 24 24"><path d="M6 1H24V16H6Z" fill="#f7f7f7"/><path d="M0 7H18V23H0Z" fill="#222"/><path d="M6 7H18V16H6Z" fill="#b8b8b8"/></svg></button>
        <button class="grid w-11 place-items-center" aria-label="Copilot"><svg class="size-6" viewBox="0 0 24 24">
            <defs><linearGradient id="cpA" x1="0" y1="0" x2="0" y2="1"><stop offset="0" stop-color="#1fa7f0"/><stop offset=".6" stop-color="#5bbf6a"/><stop offset="1" stop-color="#f2c12e"/></linearGradient><linearGradient id="cpB" x1="1" y1="0" x2="0" y2="1"><stop offset="0" stop-color="#a45cf0"/><stop offset=".5" stop-color="#ee4f9a"/><stop offset="1" stop-color="#fb8a3c"/></linearGradient></defs>
            <path d="M8 1H15Q17 1 18 4L19 7H15Q13 7 12 10L10 17Q9 19 7 19H4Q0 19 0 15Q1 9 4 3Q5 1 8 1Z" fill="url(#cpA)"/><path d="M15 1Q17 1 18 4L19 7H15Q12.500 7 12 9L11 4Q10 1 8 1Z" fill="#1d52c4"/><path d="M16 23H9Q7 23 6 20L5 17H9Q11 17 12 14L14 7Q15 5 17 5H20Q24 5 24 9Q23 15 20 21Q19 23 16 23Z" fill="url(#cpB)"/></svg></button>
        <button class="grid w-11 place-items-center" aria-label="Edge"><svg class="size-6" viewBox="0 0 24 24">
            <defs><linearGradient id="edA" x1="0" y1="0" x2="1" y2="0"><stop offset="0" stop-color="#1e9be0"/><stop offset=".6" stop-color="#36c3c8"/><stop offset="1" stop-color="#6ad84f"/></linearGradient></defs>
            <circle cx="12" cy="12" r="12" fill="#1478d4"/><path d="M0 11A12 12 0 0 1 24 11Q24 16.500 18 16.500Q14 16.500 14.500 14Q16 10 12 8Q5 6 0 11Z" fill="url(#edA)"/><path d="M9 10Q5 15 9.500 20T20 21Q16 24 11 24Q3 22 3 15Q4 9 11 8.500Z" fill="#0c59a4"/><path d="M14.500 13Q13 17 18 17.500Q22 17.500 23.500 15Q22 20 17 20Q10 19 10.500 13.500Q11 11 13 10.500Q15 11.500 14.500 13Z" fill="#d9d9d9"/></svg></button>
        <button class="grid w-11 place-items-center" aria-label="Store"><svg class="size-6" viewBox="0 0 24 24"><path d="M7.500 7V3.500Q7.500 1.500 9.500 1.500H14.500Q16.500 1.500 16.500 3.500V7" fill="none" stroke="#35b4f0" stroke-width="2"/><path d="M1 5.500H23V20Q23 24 19 24H5Q1 24 1 20Z" fill="#17467e"/><path d="M7.500 10H11.500V14H7.500Z" fill="#f25022"/><path d="M12.500 10H16.500V14H12.500Z" fill="#7fba00"/><path d="M7.500 15H11.500V19H7.500Z" fill="#00a4ef"/><path d="M12.500 15H16.500V19H12.500Z" fill="#ffb900"/></svg></button>
        <button class="grid w-11 place-items-center" aria-label="WhatsApp"><svg class="size-6" viewBox="0 0 24 24" fill="none"><path d="M1.500 22.500 3 17A10.500 10.500 0 1 1 7 21Z" fill="#ececec" stroke="#1f8058" stroke-width="2"/><path d="M8 6.500 10 7 10.500 10 9.500 11.500Q11 14 13.500 14.800L15 13.500 17.500 14.800Q17.500 17.500 15 17.500Q7.500 17 6.500 9Q6.500 7 8 6.500Z" fill="#1f8058"/></svg></button>
        <button class="grid w-11 place-items-center" aria-label="Chrome"><svg class="size-6"><use href="#chrome"/></svg></button>
        <button class="relative grid w-11 place-items-center" aria-label="File Explorer"><svg class="size-6" viewBox="0 0 24 24"><path d="M0 2Q0 1 1 1H8L11 4V7H0Z" fill="#d99a1c"/><path d="M0 6H9L11 4H23Q24 4 24 5V22H0Z" fill="#fcd053"/><path d="M4 22V17.500Q4 15.500 6 15.500H18Q20 15.500 20 17.500V22Z" fill="#1874c9"/></svg><span class="absolute -bottom-[6px] left-5 h-[3px] w-1.5 rounded-full bg-[#777]"></span></button>
        <button class="relative grid w-11 place-items-center" aria-label="Chrome profile"><svg class="size-6"><use href="#chrome"/></svg><span class="absolute -top-px left-[23px] size-[13px] rounded-full bg-[#b83218] text-[8px] leading-3 text-white">D</span><span class="absolute -bottom-[6px] left-5 h-[3px] w-1.5 rounded-full bg-[#777]"></span></button>
        <button class="relative grid w-11 place-items-center" aria-label="Excel"><span class="grid h-[38px] w-[38px] place-items-center rounded bg-[#f0f0f0]"><svg class="size-6" viewBox="0 0 24 24"><path d="M6 1H24V22H6Z" fill="#21a366"/><path d="M15 1H24V8H15Z" fill="#33c481"/><path d="M6 8H15V15H6Z" fill="#107c41"/><path d="M6 15H24V22H6Z" fill="#185c37"/><path d="M15 15H24V22H15Z" fill="#107c41"/><path d="M0 6H12V18H0Z" fill="#0f703b"/><path d="M3.500 8.500 8.500 15.500M8.500 8.500 3.500 15.500" stroke="#fff" stroke-width="1.800"/></svg></span><span class="absolute bottom-0 left-3.5 h-[3px] w-4 rounded-full bg-[#0067c0]"></span></button>
        <div class="flex flex-1 items-center justify-end pr-5">
            <button class="mr-5" aria-label="Show hidden icons"><svg class="size-3 rotate-180"><use href="#chev"/></svg></button>
            <span class="mr-[18px]">ENG</span>
            <svg class="mr-1.5 size-4" viewBox="0 0 16 16" fill="none" stroke="#222" stroke-width="1.200"><path d="M10 1.500H2Q.5 1.500.5 3V10.500Q.5 12 2 12H12.500M4 15H11M5.500 12V15M9 12V15"/><path d="M11.500.5H15.500V5.500H11.500ZM13.500 5.500V15"/></svg>
            <svg class="mr-4 size-4" viewBox="0 0 16 16" fill="none" stroke="#222" stroke-width="1.200"><path d="M1 6H3.500L7 2.500V13.500L3.500 10H1Z"/><path d="M9 6Q10.500 8 9 10"/><path d="M11 4Q13.500 8 11 12"/><path d="M13 2.500Q16.500 8 13 13.500" stroke="#aaa"/></svg>
            <div class="text-right leading-4">15:33<br>31/01/2026</div>
            <svg class="ml-[7px] size-4" viewBox="0 0 16 16" fill="#222"><path d="M2 12.500 3.500 10V6Q4 2 8 2Q12 2 12.500 6V10L14 12.500Z"/><path d="M6 13.500H10Q10 15.500 8 15.500T6 13.500Z"/><path d="M6 6H9L6 9.500H9" fill="none" stroke="#eee" stroke-width="1.200"/><path d="M11.500 1H15L11.500 5H15" fill="none" stroke="#222" stroke-width="1.200"/></svg>
        </div>
    </div>

    <script>
        // Build the column letters and the empty rows
        const letters = 'A,B,C,D,E,F,G,H,I,J,K,L,M,N,O,P,Q,R,S,T,U,V,W,X,Y,Z,AA,AB,AC'.split(',');

        let head = '<th class="w-[26px] border-r border-b border-r-[#c6c6c6] border-b-[#9a9a9a]"><svg class="ml-auto mr-1 mt-1 size-2.5" viewBox="0 0 10 10"><path d="M10 0V10H0Z" fill="#d5d5d5"/></svg></th>';
        letters.forEach((letter, i) => {
            head += i === 0
                ? '<th class="w-16 border-r border-b border-r-[#c6c6c6] border-b-[#217346] bg-[#dedede] pb-0.5 font-normal text-[#217346]">A</th>'
                : `<th class="w-16 border-r border-b border-r-[#d8d8d8] border-b-[#9a9a9a] pb-0.5 font-normal">${letter}</th>`;
        });
        document.getElementById('letters').innerHTML = head + '<th class="border-b border-[#9a9a9a]"></th>';

        let body = '';
        for (let r = 1; r <= 37; r++) {
            const label = r > 36 ? '' : r;
            body += '<tr class="h-5">' + (r === 1
                ? '<th class="border-r border-b border-r-[#217346] border-b-[#c6c6c6] bg-[#dedede] font-normal text-[#217346]">1</th>'
                : `<th class="border-r border-b border-r-[#9a9a9a] border-b-[#d8d8d8] font-normal">${label}</th>`);
            for (let c = 0; c < letters.length; c++) {
                body += '<td class="border-r border-b border-[#d0d0d0]"></td>';
            }
            body += '<td class="border-b border-[#d0d0d0]"></td></tr>';
        }
        document.getElementById('rows').innerHTML = body;
    </script>
</body>
</html>
